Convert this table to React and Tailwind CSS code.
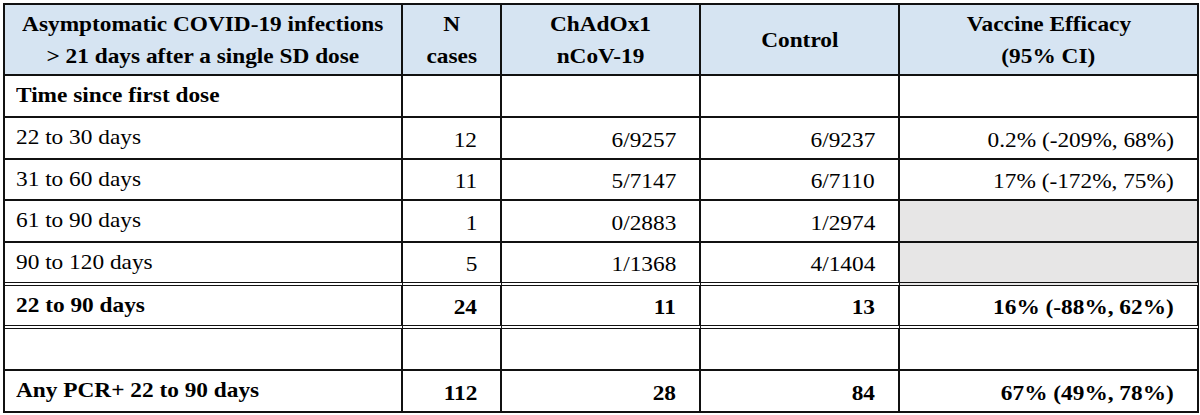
import React from "react";

const F = { fontFamily: '"Liberation Serif", "Times New Roman", serif' };

function T({ children, align = "left", bold = false }) {
  const origin =
    align === "left" ? "origin-left" : align === "right" ? "origin-right" : "origin-center";
  return (
    <span className={`inline-block whitespace-nowrap scale-x-[1.11] ${origin} ${bold ? "font-bold" : ""}`}>
      {children}
    </span>
  );
}

const rows = [
  { label: "Time since first dose", bold: true, vals: ["", "", "", ""], h: "h-[42px]" },
  { label: "22 to 30 days", vals: ["12", "6/9257", "6/9237", "0.2% (-209%, 68%)"], h: "h-[42px]" },
  { label: "31 to 60 days", vals: ["11", "5/7147", "6/7110", "17% (-172%, 75%)"], h: "h-[41px]" },
  { label: "61 to 90 days", vals: ["1", "0/2883", "1/2974", ""], grey: true, h: "h-[42px]" },
  { label: "90 to 120 days", vals: ["5", "1/1368", "4/1404", ""], grey: true, h: "h-[43px]", dbl: true },
  { label: "22 to 90 days", bold: true, vals: ["24", "11", "13", "16% (-88%, 62%)"], h: "h-[43px]", dbl: true },
  { label: "", vals: ["", "", "", ""], h: "h-[42px]" },
  { label: "Any PCR+ 22 to 90 days", bold: true, vals: ["112", "28", "84", "67% (49%, 78%)"], h: "h-[42px]" },
];

const H = "h-[71px] bg-[#d6e4f2] border-r-2 border-b-2 border-[#111] flex flex-col items-center justify-center leading-[32px]";

export default function App() {
  return (
    <div className="w-[1200px] h-[415px] bg-white pt-[3px] pl-[3px] text-[21px] text-black" style={F}>
      <div className="w-[1196px] border-l-2 border-t-2 border-[#111] grid grid-cols-[398px_99px_199px_199px_299px]">
        <div className={H}>
          <T align="center" bold>Asymptomatic COVID-19 infections</T>
          <T align="center" bold>&gt; 21 days after a single SD dose</T>
        </div>
        <div className={H}>
          <T align="center" bold>N</T>
          <T align="center" bold>cases</T>
        </div>
        <div className={H}>
          <T align="center" bold>ChAdOx1</T>
          <T align="center" bold>nCoV-19</T>
        </div>
        <div className={H}>
          <T align="center" bold>Control</T>
        </div>
        <div className={H}>
          <T align="center" bold>Vaccine Efficacy</T>
          <T align="center" bold>(95% CI)</T>
        </div>

        {rows.map((r, i) => (
          <React.Fragment key={i}>
            <div
              className={`${r.h} border-r-2 border-[#111] ${r.dbl ? "border-b-4 border-double" : "border-b-2"} flex items-center pl-[11px]`}
            >
              {r.label && <T bold={r.bold}>{r.label}</T>}
            </div>
            {r.vals.map((v, j) => (
              <div
                key={j}
                className={`${r.h} border-r-2 border-[#111] ${r.dbl ? "border-b-4 border-double" : "border-b-2"} ${
                  r.grey && j === 3 ? "bg-[#e7e6e6]" : ""
                } flex items-end justify-end pr-[23px] pb-[2px]`}
              >
                {v && (
                  <T align="right" bold={r.bold}>
                    {v}
                  </T>
                )}
              </div>
            ))}
          </React.Fragment>
        ))}
      </div>
    </div>
  );
}
